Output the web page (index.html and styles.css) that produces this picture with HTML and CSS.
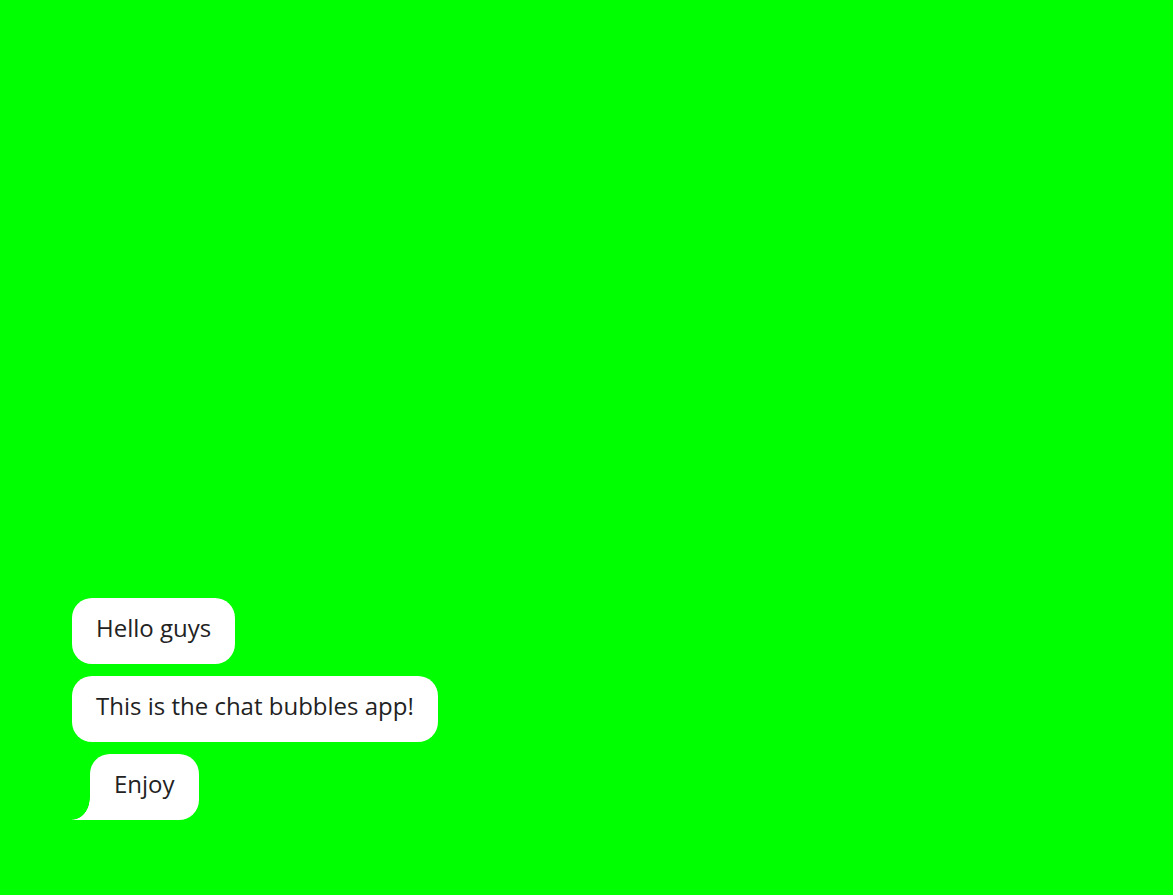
FILE: index.html
```html
<!DOCTYPE html>
<html lang="en">
<head>
<meta charset="utf-8">
<title>Chat bubbles</title>
<link rel="stylesheet" href="styles.css">
</head>
<body>
<main class="chat">
  <div class="bubble">Hello guys</div>
  <div class="bubble">This is the chat bubbles app!</div>
  <div class="bubble bubble--last">Enjoy</div>
</main>
</body>
</html>
```
FILE: styles.css
```css
html, body {
  margin: 0;
  padding: 0;
  height: 100%;
  background: #00ff00;
}
.chat {
  box-sizing: border-box;
  height: 100vh;
  display: flex;
  flex-direction: column;
  justify-content: flex-end;
  align-items: flex-start;
  gap: 12px;
  padding: 0 0 75px 72px;
  font-family: "Open Sans", "Noto Sans", sans-serif;
}
.bubble {
  position: relative;
  background: #ffffff;
  color: #222222;
  font-size: 24px;
  font-weight: 400;
  line-height: 32px;
  padding: 14px 24px 20px;
  border-radius: 20px;
}
.bubble--last {
  margin-left: 18px;
  border-bottom-left-radius: 0;
}
.bubble--last::before {
  content: "";
  position: absolute;
  left: -18px;
  bottom: 0;
  width: 18px;
  height: 22px;
  background: radial-gradient(ellipse 18px 22px at 0 0, rgba(255,255,255,0) 97%, #ffffff 100%);
}
```
